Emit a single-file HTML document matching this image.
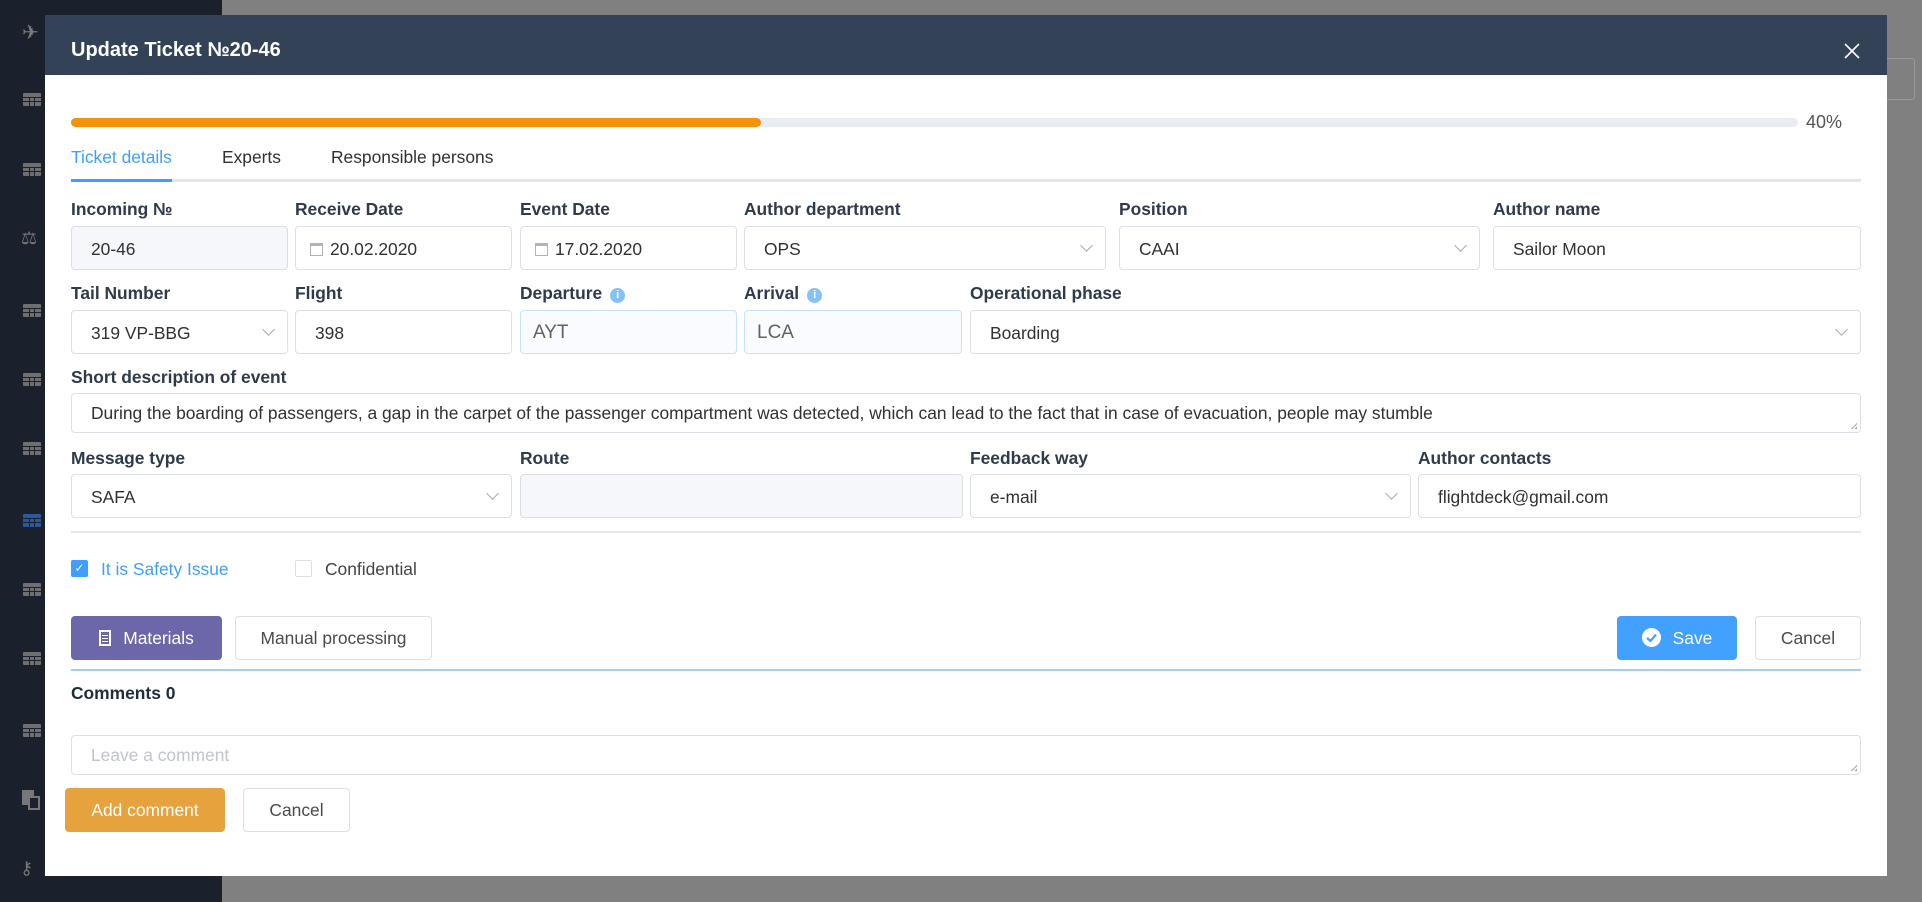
<!DOCTYPE html>
<html><head><meta charset="utf-8"><style>
*{box-sizing:border-box;margin:0;padding:0}
body{width:1922px;height:902px;position:relative;overflow:hidden;background:#808080;font-family:"Liberation Sans",Arial,sans-serif;color:#303133}
.sb{position:absolute;left:0;top:0;width:222px;height:902px;background:#1a212d}
.ic{position:absolute;left:23px;width:18px;height:13px;background:#6f6f6f;border-radius:1px}
.ic:after{content:"";position:absolute;left:0;right:0;top:4px;height:1px;background:#1a212d;box-shadow:0 4px 0 #1a212d}
.ic:before{content:"";position:absolute;top:4px;bottom:0;left:6px;width:1px;background:#1a212d;box-shadow:5px 0 0 #1a212d}
.modal{position:absolute;left:45px;top:15px;width:1842px;height:861px;background:#fff}
.hd{position:absolute;left:0;top:0;width:100%;height:60px;background:#334257;color:#fff;font-weight:bold;font-size:20px;padding:24px 26px}
.a{position:absolute}
.lbl{position:absolute;font-size:17.4px;font-weight:bold;color:#2f3a4a}
.in{position:absolute;height:44px;border:1px solid #dcdfe6;border-radius:4px;font-size:17.4px;padding:12px 19px;color:#303133;background:#fff;white-space:nowrap;overflow:hidden}
.dis{background:#f5f7fa}
.blu{background:#f9fbff;border-color:#c6e2ff;color:#606266;font-size:19px;padding:11px 12px}
.chev{position:absolute;right:14px;top:14px;width:9px;height:9px;border-right:1px solid #a8abb2;border-bottom:1px solid #a8abb2;transform:rotate(45deg)}
.cal{display:inline-block;width:13px;height:13px;border:1px solid #b0b3b8;margin-right:7px;vertical-align:-1px;border-top-width:3px}
.btn{position:absolute;height:44px;border:1px solid #dcdfe6;border-radius:4px;font-size:17.4px;text-align:center;line-height:42px;color:#4a4a4a;background:#fff}
.info{display:inline-block;width:15px;height:15px;border-radius:50%;background:#84c1f5;color:#fff;font-size:11px;text-align:center;line-height:15px;margin-left:8px;vertical-align:1px;font-weight:bold}
.rs{position:absolute;right:3px;bottom:3px;width:7px;height:7px;background:linear-gradient(135deg,transparent 55%,#aaa 55%,#aaa 65%,transparent 65%,transparent 80%,#aaa 80%)}
</style></head><body>
<div class="sb">
<div class="a" style="left:22px;top:20px;color:#7a7a7a;font-size:20px">✈</div>
<div class="ic" style="top:93px"></div>
<div class="ic" style="top:163px"></div>
<div class="a" style="left:21px;top:228px;color:#777;font-size:18px">⚖</div>
<div class="ic" style="top:304px"></div>
<div class="ic" style="top:373px"></div>
<div class="ic" style="top:442px"></div>
<div class="ic" style="top:514px;background:#2a5a9e"></div>
<div class="ic" style="top:583px"></div>
<div class="ic" style="top:652px"></div>
<div class="ic" style="top:724px"></div>
<div class="a" style="left:22px;top:790px;width:12px;height:15px;background:#777"></div><div class="a" style="left:28px;top:796px;width:12px;height:14px;border:2px solid #777;background:#1a212d"></div>
<div class="a" style="left:20px;top:858px;color:#777;font-size:18px">⚷</div>
</div>
<div class="a" style="left:1887px;top:58px;width:28px;height:42px;border:1px solid #999;border-left:none;border-radius:0 3px 3px 0"></div>
<div class="modal">
<div class="hd">Update Ticket №20-46</div>
<svg class="a" style="left:1799px;top:28px" width="16" height="16" viewBox="0 0 16 16"><path d="M1 1L15 15M15 1L1 15" stroke="#fff" stroke-width="1.6"/></svg>
<div class="a" style="left:26px;top:103px;width:1727px;height:9px;border-radius:5px;background:#e9ecf2"><div style="width:690px;height:9px;border-radius:5px;background:#f39309"></div></div>
<div class="a" style="left:1761px;top:97px;font-size:18px;color:#555">40%</div>
<div class="a" style="left:26px;top:132px;font-size:17.4px;color:#409eff">Ticket details</div>
<div class="a" style="left:177px;top:132px;font-size:17.4px;color:#303133">Experts</div>
<div class="a" style="left:286px;top:132px;font-size:17.4px;color:#303133">Responsible persons</div>
<div class="a" style="left:26px;top:164px;width:1790px;height:3px;background:#e4e7ed"></div>
<div class="a" style="left:26px;top:164px;width:101px;height:3px;background:#409eff"></div>

<div class="lbl" style="left:26px;top:184px">Incoming №</div>
<div class="lbl" style="left:250px;top:184px">Receive Date</div>
<div class="lbl" style="left:475px;top:184px">Event Date</div>
<div class="lbl" style="left:699px;top:184px">Author department</div>
<div class="lbl" style="left:1074px;top:184px">Position</div>
<div class="lbl" style="left:1448px;top:184px">Author name</div>
<div class="in dis" style="left:26px;top:211px;width:217px">20-46</div>
<div class="in" style="left:250px;top:211px;width:217px;padding-left:14px"><span class="cal"></span>20.02.2020</div>
<div class="in" style="left:475px;top:211px;width:217px;padding-left:14px"><span class="cal"></span>17.02.2020</div>
<div class="in" style="left:699px;top:211px;width:362px">OPS<span class="chev"></span></div>
<div class="in" style="left:1074px;top:211px;width:361px">CAAI<span class="chev"></span></div>
<div class="in" style="left:1448px;top:211px;width:368px">Sailor Moon</div>

<div class="lbl" style="left:26px;top:268px">Tail Number</div>
<div class="lbl" style="left:250px;top:268px">Flight</div>
<div class="lbl" style="left:475px;top:268px">Departure<span class="info">i</span></div>
<div class="lbl" style="left:699px;top:268px">Arrival<span class="info">i</span></div>
<div class="lbl" style="left:925px;top:268px">Operational phase</div>
<div class="in" style="left:26px;top:295px;width:217px">319 VP-BBG<span class="chev"></span></div>
<div class="in" style="left:250px;top:295px;width:217px">398</div>
<div class="in blu" style="left:475px;top:295px;width:217px">AYT</div>
<div class="in blu" style="left:699px;top:295px;width:218px">LCA</div>
<div class="in" style="left:925px;top:295px;width:891px">Boarding<span class="chev"></span></div>

<div class="lbl" style="left:26px;top:352px">Short description of event</div>
<div class="in" style="left:26px;top:378px;width:1790px;height:40px;padding:9px 19px">During the boarding of passengers, a gap in the carpet of the passenger compartment was detected, which can lead to the fact that in case of evacuation, people may stumble<span class="rs"></span></div>

<div class="lbl" style="left:26px;top:433px">Message type</div>
<div class="lbl" style="left:475px;top:433px">Route</div>
<div class="lbl" style="left:925px;top:433px">Feedback way</div>
<div class="lbl" style="left:1373px;top:433px">Author contacts</div>
<div class="in" style="left:26px;top:459px;width:441px">SAFA<span class="chev"></span></div>
<div class="in dis" style="left:475px;top:459px;width:443px"></div>
<div class="in" style="left:925px;top:459px;width:441px">e-mail<span class="chev"></span></div>
<div class="in" style="left:1373px;top:459px;width:443px">flightdeck@gmail.com</div>

<div class="a" style="left:26px;top:516px;width:1790px;height:2px;background:#e4e7ed"></div>
<div class="a" style="left:26px;top:545px;width:17px;height:17px;border-radius:2px;background:#409eff;color:#fff;font-size:12px;text-align:center;line-height:17px">✓</div>
<div class="a" style="left:56px;top:544px;font-size:17.4px;color:#409eff">It is Safety Issue</div>
<div class="a" style="left:250px;top:545px;width:17px;height:17px;border-radius:2px;border:1px solid #dcdfe6"></div>
<div class="a" style="left:280px;top:544px;font-size:17.4px;color:#444">Confidential</div>

<div class="btn" style="left:26px;top:601px;width:151px;background:#6c67a8;border-color:#6c67a8;color:#fff"><span style="display:inline-block;width:12px;height:16px;border:2px solid #fff;margin-right:12px;vertical-align:-2px;background:linear-gradient(#fff,#fff) 1px 3px/6px 1px no-repeat,linear-gradient(#fff,#fff) 1px 6px/6px 1px no-repeat,linear-gradient(#fff,#fff) 1px 9px/6px 1px no-repeat"></span>Materials</div>
<div class="btn" style="left:190px;top:601px;width:197px">Manual processing</div>
<div class="btn" style="left:1572px;top:601px;width:120px;background:#42a0ff;border-color:#42a0ff;color:#fff"><svg width="19" height="19" viewBox="0 0 19 19" style="vertical-align:-3px;margin-right:12px"><circle cx="9.5" cy="9.5" r="9.5" fill="#fff"/><path d="M5 10L8.5 13L14 6.5" stroke="#42a0ff" stroke-width="2.2" fill="none"/></svg>Save</div>
<div class="btn" style="left:1710px;top:601px;width:106px">Cancel</div>
<div class="a" style="left:26px;top:654px;width:1790px;height:2px;background:#9fcff9"></div>
<div class="a" style="left:26px;top:668px;font-size:17.4px;font-weight:bold;color:#1f2d3d">Comments 0</div>
<div class="in" style="left:26px;top:720px;width:1790px;height:40px;padding:9px 19px;color:#c0c4cc">Leave a comment<span class="rs"></span></div>
<div class="btn" style="left:20px;top:773px;width:160px;background:#e6a23c;border-color:#e6a23c;color:#fff">Add comment</div>
<div class="btn" style="left:198px;top:773px;width:107px">Cancel</div>
</div>
</body></html>
